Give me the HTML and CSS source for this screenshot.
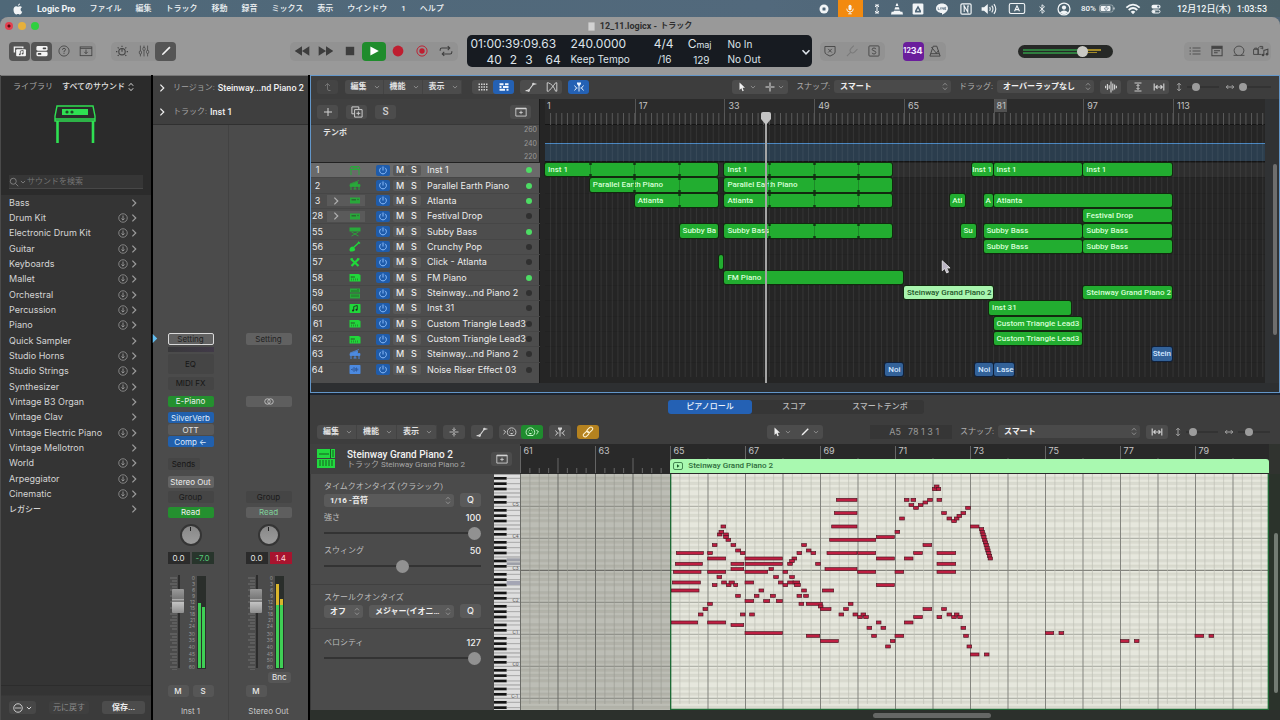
FILE: index.html
```html
<!DOCTYPE html>
<html lang="ja">
<head>
<meta charset="utf-8">
<title>12_11.logicx - トラック</title>
<link rel="stylesheet" href="styles.css">
</head>
<body>
<svg class="sprite" aria-hidden="true">
  <symbol id="i-apple" viewBox="0 0 20 24"><path fill="currentColor" d="M14 1c0 2.600-2 4.500-4 4.500C9.800 3.200 12 1.200 14 1zM18.500 17.500c-1.500 4-3.300 5.500-4.700 5.500-1.400 0-2-.9-3.800-.9s-2.400.9-3.700.9C3.500 23 1 18 1 13.500 1 9 3.500 6.600 6.200 6.600c1.600 0 2.800 1 3.800 1s2.400-1.100 4.300-1.100c1.500 0 2.800.8 3.600 1.900-3.800 2.300-3.200 7.500.6 9.100z"/></symbol>
  <symbol id="i-stopc" viewBox="0 0 20 20"><circle cx="10" cy="10" r="9" fill="currentColor"/><rect x="7" y="7" width="6" height="6" rx="1" fill="#4f6678"/></symbol>
  <symbol id="i-mic" viewBox="0 0 20 20"><rect x="7.500" y="3" width="5" height="9" rx="2.500" fill="currentColor"/><path d="M4.500 9.500a5.500 5.500 0 0 0 11 0M10 15v3M7 18h6" fill="none" stroke="currentColor" stroke-width="1.500"/></symbol>
  <symbol id="i-updown" viewBox="0 0 12 20"><path d="M6 2v16M2 6l4-4 4 4M2 14l4 4 4-4M2 2h8M2 18h8" fill="none" stroke="currentColor" stroke-width="2"/></symbol>
  <symbol id="i-cone" viewBox="0 0 20 20"><path fill="currentColor" d="M9 1h2l1.300 4H7.700zM7 7h6l1.300 4H5.700zM5 13h10l.8 1.500H19L20 19H0l1-4.500h3.200z"/></symbol>
  <symbol id="i-tri" viewBox="0 0 20 20"><rect x="1" y="1" width="18" height="18" rx="2" fill="currentColor"/><path d="M10 4l5 9v3H5v-3zM8 13h4l-2-4z" fill="#4f6678" fill-rule="evenodd"/></symbol>
  <symbol id="i-bubble" viewBox="0 0 24 22"><path fill="currentColor" d="M12 1c6.500 0 11 4 11 9 0 4.500-5 8.500-11 11.500v-3.200C5.500 18 1 14.500 1 10c0-5 4.500-9 11-9z"/><path d="M5 8v4h2.500M9.500 8v4M12 12V8l3 4V8M19.500 8H17v4h2.500M17 10h2" fill="none" stroke="#4f6678" stroke-width="1.200"/></symbol>
  <symbol id="i-n" viewBox="0 0 20 20"><rect x="1.500" y="1.500" width="17" height="17" rx="2" fill="none" stroke="currentColor" stroke-width="2"/><path d="M7 15V5l6 10V5M5.500 5H8M12 5h3" fill="none" stroke="currentColor" stroke-width="1.800"/></symbol>
  <symbol id="i-vol" viewBox="0 0 26 20"><path fill="currentColor" d="M1 7h4l6-5v16l-6-5H1z"/><path d="M14 7q2 3 0 6M17.500 4.500q4 5.500 0 11M21 2q6 8 0 16" fill="none" stroke="currentColor" stroke-width="1.800"/></symbol>
  <symbol id="i-a" viewBox="0 0 30 20"><rect x="1" y="1" width="28" height="18" rx="3" fill="none" stroke="currentColor" stroke-width="2"/><path d="M10.500 15L15 5l4.500 10M12 12h6" fill="none" stroke="currentColor" stroke-width="2"/></symbol>
  <symbol id="i-bt" viewBox="0 0 12 20"><path d="M1 5.500l10 9L6 18.500v-17L11 5.500l-10 9" fill="none" stroke="currentColor" stroke-width="1.800"/></symbol>
  <symbol id="i-user" viewBox="0 0 20 20"><circle cx="10" cy="10" r="8.500" fill="none" stroke="currentColor" stroke-width="1.800"/><circle cx="10" cy="8" r="3" fill="currentColor"/><path d="M4 15q6-6 12 0-6 5-12 0z" fill="currentColor"/></symbol>
  <symbol id="i-batt" viewBox="0 0 32 16"><rect x="1" y="1" width="27" height="14" rx="3.500" fill="none" stroke="currentColor" stroke-width="1.500" opacity=".6"/><rect x="3" y="3" width="20" height="10" rx="2" fill="currentColor"/><path d="M16 2l-6 7h4l-1 6 6-8h-4z" fill="currentColor" stroke="#4f6678"/><path d="M30 6v4" stroke="currentColor" stroke-width="2"/></symbol>
  <symbol id="i-wifi" viewBox="0 0 24 18"><path d="M2 7q10-9 20 0M5.500 10.500q6.500-6 13 0" fill="none" stroke="currentColor" stroke-width="2.600"/><path d="M8.500 13q3.500-3 7 0L12 17z" fill="currentColor"/></symbol>
  <symbol id="i-cc" viewBox="0 0 20 20"><rect x="1" y="1.500" width="18" height="7.500" rx="3.700" fill="currentColor"/><circle cx="14.500" cy="5.200" r="2.300" fill="#4f6678"/><rect x="2" y="12" width="16" height="6" rx="3" fill="none" stroke="currentColor" stroke-width="2"/><circle cx="5.500" cy="15" r="3" fill="currentColor"/></symbol>

  <symbol id="i-lib" viewBox="0 0 20 20"><path d="M2 12V4.500h12V6" fill="none" stroke="currentColor" stroke-width="2"/><rect x="4.500" y="7.500" width="14" height="10" rx="1.500" fill="currentColor"/><path d="M10.500 14.500V10l4-1v4.500" fill="none" stroke="#555" stroke-width="1.100"/><circle cx="9.700" cy="14.700" r="1.300" fill="#555"/><circle cx="13.700" cy="13.700" r="1.300" fill="#555"/></symbol>
  <symbol id="i-insp" viewBox="0 0 20 20"><rect x="2" y="3" width="16" height="6.500" rx="2" fill="currentColor"/><rect x="2" y="11" width="16" height="6.500" rx="2" fill="currentColor"/><rect x="11" y="5" width="5" height="2.500" rx="1" fill="#444"/><rect x="4" y="13" width="5" height="2.500" rx="1" fill="#444"/></symbol>
  <symbol id="i-help" viewBox="0 0 20 20"><circle cx="10" cy="10" r="8.500" fill="none" stroke="currentColor" stroke-width="1.400"/><path d="M7.500 8q0-2.500 2.500-2.500t2.500 2.300q0 1.500-2.500 2.700v1.500M10 13.300v1.500" fill="none" stroke="currentColor" stroke-width="1.500"/></symbol>
  <symbol id="i-down" viewBox="0 0 24 20"><rect x="2" y="3" width="20" height="15" fill="none" stroke="currentColor" stroke-width="1.500"/><path d="M2 5.500h20M12 7.500v7M9 11.500l3 3 3-3" fill="none" stroke="currentColor" stroke-width="1.500"/></symbol>
  <symbol id="i-smart" viewBox="0 0 24 20"><circle cx="12" cy="11" r="4.800" fill="none" stroke="currentColor" stroke-width="1.700"/><path d="M12 11V7M3 11h2M19 11h2M5.600 4.600L7 6M18.400 4.600L17 6M5.600 17.400L7 16M18.400 17.400L17 16M12 2v2" stroke="currentColor" stroke-width="1.700"/></symbol>
  <symbol id="i-mixer" viewBox="0 0 20 20"><path d="M4 1v18M10 1v18M16 1v18" stroke="currentColor" stroke-width="1.300"/><g fill="#999" stroke="currentColor" stroke-width="1.300"><rect x="2.200" y="10" width="3.600" height="5" rx="1.500"/><rect x="8.200" y="4" width="3.600" height="5" rx="1.500"/><rect x="14.200" y="9" width="3.600" height="5" rx="1.500"/></g></symbol>
  <symbol id="i-pencil" viewBox="0 0 20 20"><path d="M3 17l1-3L15.500 2.500l2 2L6 16z" fill="currentColor"/></symbol>
  <symbol id="i-rew" viewBox="0 0 24 20"><path d="M12 3v14L1 10zM23 3v14l-11-7z" fill="currentColor"/></symbol>
  <symbol id="i-fwd" viewBox="0 0 24 20"><path d="M12 3v14l11-7zM1 3v14l11-7z" fill="currentColor"/></symbol>
  <symbol id="i-stop" viewBox="0 0 20 20"><rect x="3" y="3" width="14" height="14" fill="currentColor"/></symbol>
  <symbol id="i-play" viewBox="0 0 20 20"><path d="M4 2.500v15L18 10z" fill="currentColor"/></symbol>
  <symbol id="i-rec" viewBox="0 0 20 20"><circle cx="10" cy="10" r="9" fill="currentColor"/></symbol>
  <symbol id="i-rec2" viewBox="0 0 20 20"><circle cx="10" cy="10" r="8.500" fill="none" stroke="currentColor" stroke-width="1.600"/><circle cx="10" cy="10" r="4.500" fill="currentColor"/></symbol>
  <symbol id="i-cycle" viewBox="0 0 24 20"><path d="M2 9.500V8q0-3 3-3h13M15 1.500L18.500 5 15 8.500M22 10.500V12q0 3-3 3H6M9 11.500L5.500 15 9 18.500" fill="none" stroke="currentColor" stroke-width="1.800"/></symbol>
  <symbol id="i-shield" viewBox="0 0 20 20"><path d="M1.500 2.500h17v9q0 3-3 4.200L10 18.500l-5.500-2.800q-3-1.200-3-4.200zM7 6.500l6 6M13 6.500l-6 6" fill="none" stroke="currentColor" stroke-width="1.500"/></symbol>
  <symbol id="i-tune" viewBox="0 0 20 20"><path d="M1.500 18.500L8 12M8 12q-3-3 .5-6.500L13 1M8 12q3 3 6.500-.5L19 7" fill="none" stroke="currentColor" stroke-width="1.700"/></symbol>
  <symbol id="i-s" viewBox="0 0 20 20"><rect x="1.500" y="1.500" width="17" height="17" rx="1.500" fill="none" stroke="currentColor" stroke-width="1.500"/><path d="M13 7q0-2-3-2t-3 2.300q0 2 3 2.500t3 2.700Q13 15 10 15t-3-2" fill="none" stroke="currentColor" stroke-width="1.500"/></symbol>
  <symbol id="i-metro" viewBox="0 0 20 20"><path d="M1.500 18.500L7 2h6l5.500 16.500zM3 14.500h14M4 3.500l9 11M16 9l-4 5" fill="none" stroke="currentColor" stroke-width="1.600"/></symbol>
  <symbol id="i-list" viewBox="0 0 24 20"><path d="M7 4h16M7 10h16M7 16h16M1 4h3M1 10h3M1 16h3" stroke="currentColor" stroke-width="1.700"/></symbol>
  <symbol id="i-note" viewBox="0 0 20 20"><path d="M1.500 2h17v16h-17zM1.500 5.500h17M5 9.500h10M5 13h6" fill="none" stroke="currentColor" stroke-width="1.700"/><path d="M1.500 2h17v4h-17z" fill="currentColor"/></symbol>
  <symbol id="i-loop" viewBox="0 0 22 20"><path d="M1 18h20M8 18q-6-2.500-6-8.500a9 8.500 0 0 1 18 0q0 6-6 8.500" fill="none" stroke="currentColor" stroke-width="1.600"/></symbol>
  <symbol id="i-media" viewBox="0 0 28 20"><path d="M1 7h8v9H1zM9 16V5l3-3h5v5M13 5h4M9 16h6M3 7V5h4v2" fill="none" stroke="currentColor" stroke-width="1.600"/><path d="M19 17V9l7-2v8" fill="none" stroke="currentColor" stroke-width="1.800"/><circle cx="17.500" cy="17" r="2.300" fill="currentColor"/><circle cx="24.500" cy="15.500" r="2.300" fill="currentColor"/></symbol>

  <symbol id="i-chev" viewBox="0 0 10 10"><path d="M1.500 3.200L5 6.800l3.500-3.600" fill="none" stroke="currentColor" stroke-width="1.500"/></symbol>
  <symbol id="i-right" viewBox="0 0 10 10"><path d="M3 .8L7.200 5 3 9.200" fill="none" stroke="currentColor" stroke-width="1.500"/></symbol>
  <symbol id="i-pop" viewBox="0 0 10 16"><path d="M1.500 6L5 2.200 8.500 6M1.500 10L5 13.800 8.500 10" fill="none" stroke="currentColor" stroke-width="1.500"/></symbol>
  <symbol id="i-up" viewBox="0 0 20 20"><path d="M4 8l5-5 5 5M9 3v11q0 3 3 3h3" fill="none" stroke="currentColor" stroke-width="1.800"/></symbol>
  <symbol id="i-dots" viewBox="0 0 20 20"><g fill="currentColor"><path d="M1 3h3v3H1zM6 3h3v3H6zM11 3h3v3h-3zM16 3h3v3h-3zM1 8.500h3v3H1zM6 8.500h3v3H6zM11 8.500h3v3h-3zM16 8.500h3v3h-3zM1 14h3v3H1zM6 14h3v3H6zM11 14h3v3h-3zM16 14h3v3h-3z"/></g></symbol>
  <symbol id="i-rows" viewBox="0 0 20 20"><path d="M1 4.500h8M12 4.500h7M1 10h4M8 10h11M1 15.500h11M15 15.500h4" stroke="currentColor" stroke-width="3.600"/></symbol>
  <symbol id="i-auto" viewBox="0 0 20 20"><path d="M1 16h5L14 5h5" fill="none" stroke="currentColor" stroke-width="1.800"/><circle cx="6" cy="16" r="2.200" fill="currentColor"/><circle cx="14" cy="5" r="2.200" fill="currentColor"/></symbol>
  <symbol id="i-flex" viewBox="0 0 20 20"><path d="M2 3v14h2Q8 14 16 3h2v14h-2Q12 6 4 3z" fill="none" stroke="currentColor" stroke-width="1.600"/></symbol>
  <symbol id="i-catch" viewBox="0 0 20 20"><path d="M6 1h8v3l-4 5-4-5z" fill="currentColor"/><path d="M10 7v12M1 7l4 5-4 5M19 7l-4 5 4 5M5 12h2M13 12h2" fill="none" stroke="currentColor" stroke-width="1.900"/></symbol>
  <symbol id="i-arrow" viewBox="0 0 16 20"><path d="M3 1v15l3.700-3.500L9 18.500l2.500-1-2.300-5.800H14z" fill="currentColor"/></symbol>
  <symbol id="i-cross" viewBox="0 0 20 20"><path d="M10 1v7M10 12v7M1 10h7M12 10h7" stroke="currentColor" stroke-width="1.800"/><circle cx="10" cy="10" r="1.500" fill="currentColor"/></symbol>
  <symbol id="i-wave" viewBox="0 0 20 20"><path d="M1 8v4M4 5v10M7 7v6M10 1v18M13 4v12M16 6v8M19 8v4" stroke="currentColor" stroke-width="1.900"/></symbol>
  <symbol id="i-vfit" viewBox="0 0 20 20"><path d="M3 2h14M3 18h14M10 5v10M7 8l3-3 3 3M7 12l3 3 3-3" fill="none" stroke="currentColor" stroke-width="1.900"/></symbol>
  <symbol id="i-hfit" viewBox="0 0 20 20"><path d="M2 4v12M18 4v12M4.500 10h11M7.500 7l-3 3 3 3M12.500 7l3 3-3 3" fill="none" stroke="currentColor" stroke-width="1.900"/></symbol>
  <symbol id="i-v" viewBox="0 0 10 16"><path d="M5 2v12M2 5l3-3 3 3M2 11l3 3 3-3" fill="none" stroke="currentColor" stroke-width="1.600"/></symbol>
  <symbol id="i-h" viewBox="0 0 16 10"><path d="M2 5h12M5 2L2 5l3 3M11 2l3 3-3 3" fill="none" stroke="currentColor" stroke-width="1.600"/></symbol>
  <symbol id="i-plus" viewBox="0 0 20 20"><path d="M10 2v16M2 10h16" stroke="currentColor" stroke-width="2"/></symbol>
  <symbol id="i-dup" viewBox="0 0 20 20"><path d="M5 13H1.500V1.500H13V5M6 6h12.500v12.500H6zM12.200 9v6.500M9 12.200h6.500" fill="none" stroke="currentColor" stroke-width="1.600"/></symbol>
  <symbol id="i-addw" viewBox="0 0 22 20"><path d="M1.500 3h19v14.500h-19zM11 7.500v6.500M7.800 10.800h6.400" fill="none" stroke="currentColor" stroke-width="1.600"/><path d="M1.500 2.500h19v2.500h-19z" fill="currentColor"/></symbol>
  <symbol id="i-power" viewBox="0 0 20 20"><path d="M10 1v9M5.500 4a7.500 7.500 0 1 0 9 0" fill="none" stroke="currentColor" stroke-width="2.100"/></symbol>
  <symbol id="i-collapse" viewBox="0 0 20 20"><path d="M1 10h18M10 1v6M7 4.500l3 3 3-3M10 19v-6M7 15.500l3-3 3 3" fill="none" stroke="currentColor" stroke-width="1.600"/></symbol>
  <symbol id="i-midiin" viewBox="0 0 26 20"><path d="M1 6l4 4-4 4" fill="none" stroke="currentColor" stroke-width="1.800"/><path d="M11 16.500a8 8 0 1 1 10 0z" fill="none" stroke="currentColor" stroke-width="1.600"/><path d="M12 10h1M14 7h1M17.500 7h1M19.500 10h1M14 13h4" stroke="currentColor" stroke-width="2"/></symbol>
  <symbol id="i-midiout" viewBox="0 0 26 20"><path d="M21 6l4 4-4 4" fill="none" stroke="currentColor" stroke-width="1.800"/><path d="M5 16.500a8 8 0 1 1 10 0z" fill="none" stroke="currentColor" stroke-width="1.600"/><path d="M6 10h1M8 7h1M11.500 7h1M13.500 10h1M8 13h4" stroke="currentColor" stroke-width="2"/></symbol>
  <symbol id="i-link" viewBox="0 0 20 20"><g fill="none" stroke="currentColor" stroke-width="1.700"><rect x="7.500" y="3.500" width="11" height="6" rx="3" transform="rotate(-45 13 6.500)"/><rect x="1.500" y="10.500" width="11" height="6" rx="3" transform="rotate(-45 7 13.500)"/></g></symbol>
  <symbol id="i-search" viewBox="0 0 20 20"><circle cx="8.500" cy="8.500" r="6" fill="none" stroke="currentColor" stroke-width="1.800"/><path d="M13 13l5.500 5.500" stroke="currentColor" stroke-width="1.800"/></symbol>
  <symbol id="i-dl" viewBox="0 0 20 20"><circle cx="10" cy="10" r="8.500" fill="none" stroke="currentColor" stroke-width="1.500"/><path d="M10 5v9M6.800 11l3.200 3.200 3.200-3.200" fill="none" stroke="currentColor" stroke-width="1.800"/></symbol>
  <symbol id="i-more" viewBox="0 0 20 20"><circle cx="10" cy="10" r="8.500" fill="none" stroke="currentColor" stroke-width="1.600"/><g fill="currentColor"><circle cx="6" cy="10" r="1.400"/><circle cx="10" cy="10" r="1.400"/><circle cx="14" cy="10" r="1.400"/></g></symbol>
  <symbol id="i-stereo" viewBox="0 0 20 14"><g fill="none" stroke="currentColor" stroke-width="1.800"><circle cx="7" cy="7" r="5.500"/><circle cx="13" cy="7" r="5.500"/></g></symbol>

  <symbol id="t-keys" viewBox="0 0 24 20"><path d="M4 2h16l2 6H2zM4 8v11M20 8v11" fill="none" stroke="currentColor" stroke-width="2"/><path d="M7 3.500h10V6H7z" fill="currentColor"/></symbol>
  <symbol id="t-grand" viewBox="0 0 24 20"><path d="M2 7L20 0M5 7l12-4v5h5v4H2V8z" fill="currentColor" stroke="currentColor" stroke-width="1.500"/><path d="M4 11v8M12 11v6M20 11v8M9 17h6" stroke="currentColor" stroke-width="2"/></symbol>
  <symbol id="t-box" viewBox="0 0 24 20"><path d="M2 4h20v12H2z" fill="currentColor"/><path d="M5 7h9v3H5z" fill="#2c6b32"/><circle cx="18" cy="8" r="1.500" fill="#2c6b32"/></symbol>
  <symbol id="t-synth" viewBox="0 0 24 20"><path d="M1 2h22v8H1z" fill="currentColor"/><path d="M5 11l14 8M19 11L5 19" stroke="currentColor" stroke-width="1.800"/></symbol>
  <symbol id="t-guitar" viewBox="0 0 24 20"><path d="M2 13q2-3 4.500-3t5 4-3 5.500-7-.5 .5-6z" fill="currentColor"/><path d="M8 13L20 2M18 .5l4 3.500" stroke="currentColor" stroke-width="2.800"/></symbol>
  <symbol id="t-x" viewBox="0 0 24 20"><path d="M4 3l15 14M19 3L5 17" stroke="currentColor" stroke-width="4.500"/><path d="M3 3h5M16 3h5" stroke="currentColor" stroke-width="3"/></symbol>
  <symbol id="t-box2" viewBox="0 0 24 20"><path d="M1 3h18l4 2v13H1z" fill="currentColor"/><path d="M4 8h7v2H4zM5 12v4M9 12v4M13 12v4M17 12v4" stroke="#2a6a2e" stroke-width="1.200" fill="none"/></symbol>
  <symbol id="t-rack" viewBox="0 0 24 20"><path d="M2 0h20v8H2zM2 10h20v10H2z" fill="currentColor"/><path d="M4 5h12M18 1v6M6 12v5M10 12v5M14 12v5M18 12v5" stroke="#1c5220" stroke-width="1.200"/></symbol>
  <symbol id="t-note" viewBox="0 0 24 20"><rect x="1" y="1" width="22" height="18" rx="1.500" fill="currentColor"/><path d="M9.500 14V6l7-2v8" fill="none" stroke="#222" stroke-width="1.700"/><circle cx="8" cy="14" r="2" fill="#222"/><circle cx="15" cy="12.500" r="2" fill="#222"/></symbol>
  <symbol id="t-wave" viewBox="0 0 24 20"><rect x="1" y="1" width="22" height="18" rx="1.500" fill="currentColor"/><path d="M5 9v2M7.500 8v4M10 5v10M12.500 7v6M15 6v8M17.500 8v4" stroke="#2b5290" stroke-width="1.600"/></symbol>
</svg>

<header class="menubar">
  <nav class="menus">
    <svg class="ic apple"><use href="#i-apple"/></svg>
    <a class="app" href="#">Logic Pro</a><a href="#">ファイル</a><a href="#">編集</a><a href="#">トラック</a><a href="#">移動</a><a href="#">録音</a><a href="#">ミックス</a><a href="#">表示</a><a href="#">ウインドウ</a><a href="#">1</a><a href="#">ヘルプ</a>
  </nav>
  <div class="status">
    <svg class="ic w10"><use href="#i-stopc"/></svg>
    <span class="mic"><svg class="ic w12"><use href="#i-mic"/></svg></span>
    <svg class="ic w10"><use href="#i-updown"/></svg>
    <svg class="ic w12"><use href="#i-cone"/></svg>
    <svg class="ic w12"><use href="#i-tri"/></svg>
    <svg class="ic w18"><use href="#i-bubble"/></svg>
    <svg class="ic w12"><use href="#i-n"/></svg>
    <svg class="ic w16"><use href="#i-vol"/></svg>
    <svg class="ic w22"><use href="#i-a"/></svg>
    <svg class="ic w10"><use href="#i-bt"/></svg>
    <svg class="ic w16"><use href="#i-user"/></svg>
    <span class="batt">80%<svg class="ic w16"><use href="#i-batt"/></svg></span>
    <svg class="ic w18"><use href="#i-wifi"/></svg>
    <svg class="ic w10"><use href="#i-cc"/></svg>
    <time class="clock"><span>12月12日(木)</span> <span>1:03:53</span></time>
  </div>
</header>

<div class="window">
  <div class="titlebar">
    <div class="lights"><button class="light red" aria-label="閉じる"></button><button class="light amber" aria-label="しまう"></button><button class="light green" aria-label="拡大"></button></div>
    <h1 class="title"><span class="doc"></span>12_11.logicx - <small>トラック</small></h1>
  </div>

  <div class="controlbar">
    <div class="cgroup">
      <button class="cb on" aria-label="ライブラリ"><svg class="ic w16"><use href="#i-lib"/></svg></button>
      <button class="cb on" aria-label="インスペクタ"><svg class="ic w16"><use href="#i-insp"/></svg></button>
      <button class="cb" aria-label="ヘルプ"><svg class="ic w12"><use href="#i-help"/></svg></button>
      <button class="cb" aria-label="ツールバー"><svg class="ic w14"><use href="#i-down"/></svg></button>
    </div>
    <div class="cgroup second">
      <button class="cb" aria-label="Smart Control"><svg class="ic w16"><use href="#i-smart"/></svg></button>
      <button class="cb" aria-label="ミキサー"><svg class="ic w12"><use href="#i-mixer"/></svg></button>
      <button class="cb on" aria-label="エディタ"><svg class="ic w12"><use href="#i-pencil"/></svg></button>
    </div>
    <i class="sp sp-a"></i>
    <div class="cgroup transport">
      <button class="cb" aria-label="巻き戻し"><svg class="ic w16"><use href="#i-rew"/></svg></button>
      <button class="cb" aria-label="早送り"><svg class="ic w16"><use href="#i-fwd"/></svg></button>
      <button class="cb" aria-label="停止"><svg class="ic w12"><use href="#i-stop"/></svg></button>
      <button class="cb play" aria-label="再生"><svg class="ic w12"><use href="#i-play"/></svg></button>
      <button class="cb rec" aria-label="録音"><svg class="ic w12"><use href="#i-rec"/></svg></button>
      <button class="cb rec" aria-label="キャプチャ録音"><svg class="ic w12"><use href="#i-rec2"/></svg></button>
      <button class="cb" aria-label="サイクル"><svg class="ic w14"><use href="#i-cycle"/></svg></button>
    </div>
    <div class="lcd">
      <div class="lcd-pos"><b>01:00:39:09.63</b><span class="beats"><b>40</b><b>2</b><b>3</b><b>64</b></span></div>
      <div><b>240.0000</b><span>Keep Tempo</span></div>
      <div class="lcd-r"><b>4/4</b><span class="div">/16</span></div>
      <div class="lcd-r"><b>C<small>maj</small></b><span class="div">129</span></div>
      <div><span>No In</span><span>No Out</span></div>
      <svg class="ic w10"><use href="#i-chev"/></svg>
    </div>
    <div class="cgroup">
      <button class="cb" aria-label="置き換え"><svg class="ic w12"><use href="#i-shield"/></svg></button>
      <button class="cb dim" aria-label="チューナー"><svg class="ic w12"><use href="#i-tune"/></svg></button>
      <button class="cb" aria-label="ソロ"><svg class="ic w12"><use href="#i-s"/></svg></button>
    </div>
    <div class="cgroup count">
      <button class="cb purple" aria-label="カウントイン"><small>12</small>34</button>
      <button class="cb" aria-label="メトロノーム"><svg class="ic w12"><use href="#i-metro"/></svg></button>
    </div>
    <i class="sp sp-b"></i>
    <input class="master" type="range" value="71" aria-label="マスターボリューム">
    <i class="sp sp-c"></i>
    <div class="cgroup">
      <button class="cb" aria-label="リストエディタ"><svg class="ic w12"><use href="#i-list"/></svg></button>
      <button class="cb" aria-label="メモパッド"><svg class="ic w12"><use href="#i-note"/></svg></button>
      <button class="cb" aria-label="ループブラウザ"><svg class="ic w12"><use href="#i-loop"/></svg></button>
      <button class="cb" aria-label="ブラウザ"><svg class="ic w16"><use href="#i-media"/></svg></button>
    </div>
  </div>

  <div class="content">
    <aside class="library">
      <div class="lib-top">
        <div class="lib-tabs"><span>ライブラリ</span><button class="lib-all">すべてのサウンド<svg class="ic w8"><use href="#i-pop"/></svg></button></div>
        <svg class="lib-art" viewBox="0 0 44 40"><g fill="none" stroke="#2fe052" stroke-width="1.400"><path d="M4 1h36l2 10v5H2v-5zM2 14h40"/><path d="M4.500 16v22M40 16v22" stroke-width="2.600"/></g><path d="M9 4h26v6H9z" fill="#2fe052"/><circle cx="14" cy="7" r="1.600" fill="#1d4d26"/><circle cx="19" cy="7" r="1.600" fill="#1d4d26"/></svg>
        <label class="search"><svg class="ic w10"><use href="#i-search"/></svg><svg class="ic w6"><use href="#i-chev"/></svg><input type="text" placeholder="サウンドを検索" aria-label="サウンドを検索"></label>
      </div>
      <ul class="lib-list" id="library"></ul>
      <div class="lib-foot">
        <button class="btn" aria-label="アクション"><svg class="ic w10"><use href="#i-more"/></svg><svg class="ic w6"><use href="#i-chev"/></svg></button>
        <button class="btn faded">元に戻す</button>
        <button class="btn bold">保存...</button>
      </div>
    </aside>

    <section class="inspector">
      <div class="insp-head">
        <div class="insp-row"><svg class="ic w8"><use href="#i-right"/></svg><small>リージョン:</small><span>Steinway...nd Piano 2</span></div>
        <div class="insp-row"><svg class="ic w8"><use href="#i-right"/></svg><small>トラック:</small><span>Inst 1</span></div>
      </div>
      <div class="strips">
        <div class="strip">
          <svg class="mark" viewBox="0 0 8 12"><path d="M1 0l6 6-6 6z" fill="#62bdf0"/></svg>
          <button class="slot setting sel">Setting</button>
          <div class="gain"></div>
          <button class="slot eq">EQ</button>
          <button class="slot midi">MIDI FX</button>
          <button class="slot inst">E-Piano</button>
          <div class="fx"><button class="slot">SilverVerb</button><button class="slot off">OTT</button><button class="slot">Comp ←</button></div>
          <button class="slot sends">Sends</button>
          <button class="slot out">Stereo Out</button>
          <button class="slot grp">Group</button>
          <button class="slot read">Read</button>
          <div class="knob"></div>
          <div class="vals"><span>0.0</span><span class="peak">-7.0</span></div>
          <div class="fader" data-left="28" data-right="32"></div>
          <div class="ms"><button class="btn">M</button><button class="btn">S</button></div>
          <div class="sname">Inst 1</div>
        </div>
        <div class="strip">
          <button class="slot setting">Setting</button>
          <button class="slot inst plain" aria-label="ステレオ"><svg class="ic w10"><use href="#i-stereo"/></svg></button>
          <button class="slot grp">Group</button>
          <button class="slot read idle">Read</button>
          <div class="knob"></div>
          <div class="vals"><span>0.0</span><span class="clip">1.4</span></div>
          <div class="fader" data-left="9" data-right="24" data-hot="1"></div>
          <button class="btn bnc">Bnc</button>
          <div class="ms"><button class="btn">M</button></div>
          <div class="sname">Stereo Out</div>
        </div>
      </div>
    </section>

    <main class="main">
      <section class="tracks">
        <div class="bar tbar">
          <button class="tb faint" aria-label="上の階層へ"><svg class="ic w10"><use href="#i-up"/></svg></button>
          <div class="seg menuseg"><button>編集<svg class="ic w6"><use href="#i-chev"/></svg></button><button>機能<svg class="ic w6"><use href="#i-chev"/></svg></button><button>表示<svg class="ic w6"><use href="#i-chev"/></svg></button></div>
          <div class="seg gap-l"><button aria-label="グリッド"><svg class="ic w10"><use href="#i-dots"/></svg></button><button class="blue" aria-label="リスト"><svg class="ic w10"><use href="#i-rows"/></svg></button></div>
          <div class="seg"><button aria-label="オートメーション"><svg class="ic w12"><use href="#i-auto"/></svg></button><button aria-label="Flex"><svg class="ic w12"><use href="#i-flex"/></svg></button></div>
          <button class="tb blue" aria-label="キャッチ"><svg class="ic w10"><use href="#i-catch"/></svg></button>
          <i class="sp sp-a"></i>
          <div class="seg tools"><button aria-label="ポインタツール"><svg class="ic w10"><use href="#i-arrow"/></svg><svg class="ic w6"><use href="#i-chev"/></svg></button><button aria-label="マーキーツール"><svg class="ic w10"><use href="#i-cross"/></svg><svg class="ic w6"><use href="#i-chev"/></svg></button></div>
          <label class="lab" for="snap">スナップ:</label>
          <span class="pick pick-snap"><select id="snap"><option>スマート</option></select><svg class="ic w6"><use href="#i-pop"/></svg></span>
          <label class="lab" for="drag">ドラッグ:</label>
          <span class="pick pick-drag"><select id="drag"><option>オーバーラップなし</option></select><svg class="ic w6"><use href="#i-pop"/></svg></span>
          <button class="tb" aria-label="波形"><svg class="ic w12"><use href="#i-wave"/></svg></button>
          <div class="seg"><button aria-label="縦に合わせる"><svg class="ic w10"><use href="#i-vfit"/></svg></button><button aria-label="横に合わせる"><svg class="ic w12"><use href="#i-hfit"/></svg></button></div>
          <label class="zoom"><svg class="ic w8"><use href="#i-v"/></svg><input class="range small" type="range" value="22" aria-label="縦ズーム"></label>
          <label class="zoom"><svg class="ic w10"><use href="#i-h"/></svg><input class="range small" type="range" value="0" aria-label="横ズーム"></label>
        </div>
        <div class="arrange">
          <div class="heads">
            <div class="heads-top"><button class="tb" aria-label="トラックを追加"><svg class="ic w10"><use href="#i-plus"/></svg></button><button class="tb" aria-label="トラックを複製"><svg class="ic w12"><use href="#i-dup"/></svg></button><button class="tb solo">S</button><i class="fill"></i><button class="tb" aria-label="グローバルトラック"><svg class="ic w12"><use href="#i-addw"/></svg></button></div>
            <div class="tempo-head"><b>テンポ</b><div class="scale"><span>260</span><span>240</span><span>220</span></div></div>
            <ul class="track-list" id="tracks"></ul>
          </div>
          <div class="timeline">
            <div class="ruler" id="ruler"></div>
            <div class="tempo-lane"><div class="tempo-fill"></div></div>
            <div class="lanes" id="lanes"></div>
            <svg class="gridlines" id="gridlines"></svg>
            <div class="over"><div class="playhead" id="playhead"><svg viewBox="0 0 12 13"><path d="M1 2q0-2 2-2h6q2 0 2 2v5l-5 6-5-6z" fill="#c4c4c4"/></svg></div></div>
            <svg class="pointer" viewBox="0 0 16 22"><path d="M2 1v16l4-3.500 3 7 3-1.300-3-6.700h5.500z" fill="#b9b3c2" stroke="#eee" stroke-width="1.300"/></svg>
          </div>
          <div class="gutter"><div class="vthumb"></div></div>
        </div>
        <div class="tracks-foot"></div>
      </section>

      <section class="editor">
        <div class="tabs" role="tablist"><button role="tab" class="active" aria-selected="true">ピアノロール</button><button role="tab">スコア</button><button role="tab">スマートテンポ</button></div>
        <div class="bar ebar">
          <div class="seg menuseg wide"><button>編集<svg class="ic w6"><use href="#i-chev"/></svg></button><button>機能<svg class="ic w6"><use href="#i-chev"/></svg></button><button>表示<svg class="ic w6"><use href="#i-chev"/></svg></button></div>
          <button class="tb" aria-label="折りたたむ"><svg class="ic w10"><use href="#i-collapse"/></svg></button>
          <button class="tb" aria-label="オートメーション"><svg class="ic w12"><use href="#i-auto"/></svg></button>
          <div class="seg"><button aria-label="MIDI入力"><svg class="ic w14"><use href="#i-midiin"/></svg></button><button class="greenb" aria-label="MIDI出力"><svg class="ic w14"><use href="#i-midiout"/></svg></button></div>
          <button class="tb" aria-label="キャッチ"><svg class="ic w10"><use href="#i-catch"/></svg></button>
          <button class="tb gold" aria-label="リンク"><svg class="ic w12"><use href="#i-link"/></svg></button>
          <i class="sp sp-d"></i>
          <div class="seg tools"><button aria-label="ポインタツール"><svg class="ic w10"><use href="#i-arrow"/></svg><svg class="ic w6"><use href="#i-chev"/></svg></button><button aria-label="鉛筆ツール"><svg class="ic w10"><use href="#i-pencil"/></svg><svg class="ic w6"><use href="#i-chev"/></svg></button></div>
          <i class="sp sp-e"></i>
          <output class="readout"><span>A5</span><span>78 1 3 1</span></output>
          <label class="lab" for="esnap">スナップ:</label>
          <span class="pick pick-esnap"><select id="esnap"><option>スマート</option></select><svg class="ic w6"><use href="#i-pop"/></svg></span>
          <button class="tb" aria-label="横に合わせる"><svg class="ic w12"><use href="#i-hfit"/></svg></button>
          <label class="zoom"><svg class="ic w8"><use href="#i-v"/></svg><input class="range small" type="range" value="12" aria-label="縦ズーム"></label>
          <label class="zoom"><svg class="ic w10"><use href="#i-h"/></svg><input class="range small" type="range" value="28" aria-label="横ズーム"></label>
        </div>
        <div class="ebody">
          <div class="ehead">
            <svg class="eicon" viewBox="0 0 18 20"><path d="M0 0h18v9H0zM0 10h18v9H0z" fill="#22d83f"/><path d="M2 5h10M13.500 0v9M16 1v7M3 11v6M6 11v6M9 11v6M12 11v6M15 11v6" stroke="#155c20" stroke-width="1"/></svg>
            <div class="enames"><b>Steinway Grand Piano 2</b><span><small>トラック</small> Steinway Grand Piano 2</span></div>
            <button class="tb" aria-label="表示を追加"><svg class="ic w12"><use href="#i-addw"/></svg></button>
          </div>
          <div class="eruler"><div class="enums" id="enums"></div><svg class="eticks" id="eticks"></svg><div class="eregion" id="eregion"><svg class="ic w10" viewBox="0 0 20 16"><rect x="1" y="1" width="18" height="14" rx="3" fill="none" stroke="#2c6a3a" stroke-width="1.600"/><path d="M8 4.500v7l5-3.500z" fill="#1d5a2c"/></svg>Steinway Grand Piano 2</div></div>
          <div class="corner"></div>
          <div class="params">
            <fieldset class="pset">
              <label class="plab" for="tq">タイムクオンタイズ (クラシック)</label>
              <div class="prow"><span class="pick grow"><select id="tq" class="mixed"><option>1/16 -音符</option></select><svg class="ic w6"><use href="#i-pop"/></svg></span><button class="tb q">Q</button></div>
              <div class="pval"><label for="str">強さ</label><output>100</output></div>
              <input class="range" id="str" type="range" value="100">
              <div class="pval"><label for="swg">スウィング</label><output>50</output></div>
              <input class="range" id="swg" type="range" value="50">
            </fieldset>
            <fieldset class="pset">
              <label class="plab" for="sq">スケールクオンタイズ</label>
              <div class="prow"><span class="pick key"><select id="sq"><option>オフ</option></select><svg class="ic w6"><use href="#i-pop"/></svg></span><span class="pick grow"><select aria-label="スケール"><option>メジャー(イオニ…</option></select><svg class="ic w6"><use href="#i-pop"/></svg></span><button class="tb q">Q</button></div>
            </fieldset>
            <fieldset class="pset">
              <div class="pval"><label for="vel">ベロシティ</label><output>127</output></div>
              <input class="range" id="vel" type="range" value="100">
            </fieldset>
          </div>
          <svg class="keys" id="keys" viewBox="0 252 78 708" preserveAspectRatio="none"></svg>
          <svg class="roll" id="roll" viewBox="-420 252 2247 708" preserveAspectRatio="none"></svg>
          <div class="gutter"><div class="vthumb low"></div></div>
        </div>
        <div class="hscroll"><div class="hthumb"></div></div>
      </section>
    </main>
  </div>
</div>
<script src="app.js"></script>
</body>
</html>
```

FILE: styles.css
```css
* { box-sizing: border-box; }
body {
  margin: 0; height: 100vh; overflow: hidden; display: flex; flex-direction: column;
  background: #4f6678; color: #e4e4e4;
  font: 9px/12px Roboto, "Noto Sans CJK JP", sans-serif;
}
button, input, select { font: inherit; color: inherit; margin: 0; padding: 0; border: 0; background: none; }
button { display: flex; align-items: center; justify-content: center; white-space: nowrap; }
a { color: inherit; text-decoration: none; }
ul { list-style: none; margin: 0; padding: 0; }
small { font-size: 8px; font-weight: inherit; }
.sprite { position: absolute; width: 0; height: 0; }
.ic { display: block; flex: none; height: 12px; width: 12px; }
.w6 { width: 6px; height: 10px; }
.w8 { width: 8px; height: 10px; }
.w10 { width: 10px; height: 10px; }
.w12 { width: 12px; height: 12px; }
.w14 { width: 14px; height: 12px; }
.w16 { width: 16px; height: 14px; }
.w18 { width: 18px; height: 12px; }
.w22 { width: 22px; height: 11px; }
.fill { flex: 1; }
.sp { min-width: 8px; }
.sp-a { flex: 110 1 0; }
.sp-b { flex: 70 1 0; }
.sp-c { flex: 69 1 0; }
.sp-d { flex: 178 1 0; }
.sp-e { flex: 40 1 0; }

/* menu bar */
.menubar { flex: none; height: 17px; display: flex; justify-content: space-between; align-items: center; background: linear-gradient(90deg, #4f6878, #52697c 60%, #4a6068); color: #f2f5f7; padding: 0 13px; }
.menus { display: flex; align-items: center; gap: 14px; font-size: 8px; font-weight: 500; }
.menus .app { font-size: 9px; font-weight: 700; }
.menus .apple { width: 10px; height: 12px; }
.status { display: flex; align-items: center; gap: 9px; height: 100%; font-size: 8px; }
.mic { width: 25px; height: 17px; background: #f28a0f; display: flex; align-items: center; justify-content: center; }
.batt { display: flex; align-items: center; gap: 3px; font-weight: 500; }
.batt .ic { height: 9px; }
.clock { font-size: 9px; font-weight: 500; display: flex; gap: 6px; margin-left: 7px; }

/* window */
.window { flex: 1; min-height: 0; display: flex; flex-direction: column; background: #999; border-radius: 8px 8px 0 0; overflow: hidden; }
.titlebar { flex: none; height: 18px; display: grid; grid-template-columns: 1fr auto 1fr; align-items: center; padding: 0 5px; }
.lights { display: flex; gap: 5px; }
.light { width: 8px; height: 8px; border-radius: 50%; }
.red { background: radial-gradient(circle, #5c0b12 0 1px, #e2404f 2px); }
.amber { background: #e6b03c; }
.green { background: #2fd040; }
.title { margin: 0; font-size: 9px; line-height: 12px; font-weight: 700; color: #2e2e2e; display: flex; align-items: center; gap: 3px; }
.doc { width: 7px; height: 9px; background: #d2d2d2; border-radius: 1px; margin-right: 2px; border: 1px solid #bbb; }
.controlbar { flex: none; height: 40px; display: flex; align-items: center; padding: 0 9px 8px; }
.cgroup { display: flex; background: #929292; border-radius: 5px; gap: 1px; }
.cgroup.second { margin-left: 15px; }
.cb { width: 21px; height: 19px; border-radius: 4px; color: #444; }
.cb.on { background: #555; color: #f4f4f4; }
.cb.dim { color: #7a7a7a; }
.transport { gap: 0; margin-right: 9px; }
.transport .cb { width: 24px; color: #3d3d3d; }
.transport .play { background: #1f8c2c; color: #fff; }
.transport .rec { color: #bf1e30; }
.count { margin-left: 18px; }
.count .purple { background: #6a1d9c; color: #f5eaff; font: 700 9px/12px Inter, sans-serif; }
.count .purple small { font-size: 7px; }
.lcd { flex: none; width: 345px; height: 32px; margin-right: 8px; border-radius: 5px; background: #171b21; color: #dde3ea; display: flex; align-items: center; padding: 1px 1px 0 4px; font: 10px/15px Inter, sans-serif; }
.lcd > div { display: flex; flex-direction: column; }
.lcd b { font-weight: 400; font-size: 12px; line-height: 16px; }
.lcd > div > span { line-height: 15px; }
.lcd > div:nth-child(1) { width: 100px; }
.lcd > div:nth-child(2) { width: 67px; }
.lcd > div:nth-child(3) { width: 36px; }
.lcd > div:nth-child(4) { width: 38px; }
.lcd > div:nth-child(5) { flex: 1; margin-left: 16px; }
.lcd > .lcd-r { align-items: flex-end; }
.lcd small { font-size: 9px; }
.lcd .beats { display: flex; padding-left: 16px; gap: 8px; }
.lcd .beats b:last-child { margin-left: 5px; }
.div { padding-right: 2px; }
.master { appearance: none; width: 95px; height: 13px; border-radius: 7px; background: linear-gradient(#2f7d3f, #2f7d3f) 5px 4px / 62px 2px no-repeat, linear-gradient(#2f7d3f, #2f7d3f) 5px 7px / 62px 2px no-repeat, linear-gradient(#a38a28, #a38a28) 67px 4px / 16px 2px no-repeat, linear-gradient(#a38a28, #a38a28) 67px 7px / 12px 1px no-repeat, #262826; }
.master::-webkit-slider-thumb { appearance: none; width: 11px; height: 11px; border-radius: 50%; background: #c9c9c4; }

.content { flex: 1; min-height: 0; display: flex; background: #000; }

/* library */
.library { flex: none; width: 151px; margin-right: 2px; display: flex; flex-direction: column; background: #343434; border-left: 1px solid #4a4a4a; }
.lib-top { flex: none; height: 120px; background: #2b2b2b; padding: 4px 8px 6px; display: flex; flex-direction: column; border-top: 1px solid #777; }
.lib-tabs { display: flex; gap: 9px; padding-left: 4px; font-size: 8px; line-height: 13px; color: #a8a8a8; white-space: nowrap; }
.lib-all { font-size: 8px; font-weight: 500; color: #e2e2e2; gap: 2px; }
.lib-art { width: 44px; height: 40px; margin: 12px 0 0 44px; }
.search { margin-top: auto; height: 14px; display: flex; align-items: center; gap: 1px; color: #828282; background: #363636; border-bottom: 1px solid #484848; }
.search input { flex: 1; min-width: 0; font-size: 8px; }
.search input::placeholder { color: #747474; }
.lib-list { flex: none; height: 322px; display: grid; grid-auto-rows: 1fr; padding: 0 13px 0 8px; }
.lib-list li { display: flex; align-items: center; color: #d4d4d4; font: 9px/12px Inter, "Noto Sans CJK JP", sans-serif; }
.lib-list a { flex: 1; }
.lib-list .ic { color: #9c9c9c; margin-left: 2px; }
.lib-list .jp { font-size: 8px; font-weight: 500; }
.lib-foot { margin-top: auto; height: 35px; padding: 9px 6px 0 8px; border-top: 1px solid #2c2c2c; background: linear-gradient(#343434 9px, #3b3b3b 10px); display: flex; align-items: center; gap: 13px; font-size: 8px; }
.btn { height: 12px; background: #565656; border-radius: 3px; padding: 0 4px; color: #ececec; }
.lib-foot .btn { height: 13px; gap: 3px; background: #474747; }
.lib-foot .faded { flex: 39; color: #8a8a8a; background: #3f3f3f; font-size: 8px; }
.lib-foot .bold { flex: 46; font-weight: 700; background: #4c4c4c; }

/* inspector */
.inspector { flex: none; width: 155px; margin-right: 2px; display: flex; flex-direction: column; background: #4b4b4b; }
.insp-head { flex: none; height: 50px; background: #3f3f3f; border-bottom: 1px solid #303030; border-top: 1px solid #777; }
.insp-row { height: 24px; display: flex; align-items: center; gap: 3px; padding: 0 5px; white-space: nowrap; color: #f0f0f0; font-weight: 500; }
.insp-row small { color: #a2a2a2; margin-left: 4px; font-weight: 400; }
.strips { flex: 1; min-height: 0; display: grid; grid-template-columns: 75fr 80fr; }
.strip { position: relative; display: grid; justify-content: center; align-items: center; grid-template-columns: 46px; grid-template-rows: 1fr 12px 8px 22px 16px 20px 37px 7px 18px 17px 14px 16px 30px 15px 10px 95px 14px 14px 22px; }
.strip + .strip { border-left: 1px solid #424242; }
.mark { position: absolute; left: -1px; top: 208px; width: 6px; height: 11px; }
.slot { height: 11px; border-radius: 2px; font: 8px/10px Inter, sans-serif; color: #eee; background: #5c5c5c; }
.setting { grid-row: 2; height: 12px; color: #222; background: #616161; }
.setting.sel { border: 1px solid #d9d9d9; }
.gain { grid-row: 3; height: 5px; background: linear-gradient(90deg, #38383a, #413a48); }
.eq { grid-row: 4; height: 20px; background: #454545; color: #161616; }
.midi { grid-row: 5; height: 13px; background: #454545; color: #161616; }
.inst { grid-row: 6; background: #24902f; }
.inst.plain { background: #5e5e5e; color: #c4c4c4; }
.inst .ic { height: 7px; }
.fx { grid-row: 7; display: grid; grid-auto-rows: 1fr; height: 35px; gap: 1px; }
.fx .slot { height: auto; background: #2160ad; color: #dcebff; }
.fx .off { background: #5a5a5a; color: #e4e4e4; }
.sends { grid-row: 9; height: 12px; background: #454545; color: #161616; width: 32px; }
.out { grid-row: 10; height: 12px; background: #636363; }
.grp { grid-row: 11; height: 12px; background: #454545; color: #1a1a1a; }
.read { grid-row: 12; background: #24902f; }
.read.idle { background: #5e5e5e; color: #7fd09a; }
.knob { grid-row: 13; justify-self: center; width: 22px; height: 22px; border-radius: 50%; border: 2px solid #353535; background: linear-gradient(#222, #222) 50% 1px / 1px 4px no-repeat, linear-gradient(#888, #9c9c9c); }
.vals { grid-row: 14; display: grid; grid-template-columns: 1fr 1fr; gap: 2px; font: 8px/12px Inter, sans-serif; text-align: center; }
.vals span { background: #2b2b2b; }
.vals .peak { background: #28352c; color: #55c878; }
.vals .clip { background: #a8142e; color: #ffd7dc; }
.fader { grid-row: 16; height: 95px; display: grid; }
.fader > * { grid-area: 1 / 1; }
.fader svg { width: 46px; height: 95px; }
.fader text { font: 5px Inter, sans-serif; fill: #979797; text-anchor: end; }
.fader input { appearance: none; writing-mode: vertical-lr; direction: rtl; width: 12px; height: 93px; margin-left: 4px; background: linear-gradient(#2c2c2c, #2c2c2c) 6px 0 / 2px 100% no-repeat; }
.fader input::-webkit-slider-thumb { appearance: none; width: 12px; height: 24px; border-radius: 1px; background: linear-gradient(#9a9a9a, #777 10px, #ddd 11px, #333 12px, #c4c4c4 13px, #8e8e8e); }
.bnc { grid-row: 17; justify-self: end; height: 11px; font: 8px/10px Inter, sans-serif; margin-right: 1px; }
.ms { grid-row: 18; display: grid; grid-template-columns: 1fr 1fr; gap: 4px; font: 500 8px/10px Inter, sans-serif; }
.sname { grid-row: 19; text-align: center; font: 8px/12px Inter, sans-serif; color: #c8c8c8; padding-top: 3px; }

/* shared bars */
.main { flex: 1; min-width: 0; display: flex; flex-direction: column; background: #2d2d2d; }
.bar { flex: none; height: 23px; display: flex; align-items: center; padding: 0 8px 2px 6px; gap: 6px; background: #3d3d3d; white-space: nowrap; font-size: 8px; }
.tb, .seg { height: 14px; border-radius: 3px; background: #4c4c4c; color: #d2d2d2; flex: none; }
.tb { width: 21px; }
.seg { display: flex; }
.seg button { width: 21px; height: 14px; gap: 3px; }
.menuseg button { width: 39px; gap: 7px; font-weight: 700; color: #e2e2e2; border-right: 1px solid #434343; padding-left: 2px; }
.tbar .menuseg { margin-left: 1px; }
.menuseg.wide button { width: 40px; }
.menuseg .ic, .tools .w6 { color: #8f8f8f; }
.tools button { width: 28px; color: #f0f0f0; }
.gap-l { margin-left: 4px; }
.faint { background: #444; color: #787878; }
.blue, .seg .blue { background: #2461b4; color: #eef5ff; border-radius: 3px; }
.seg .greenb { background: #1f8c2e; color: #d9ffdc; border-radius: 3px; }
.gold { background: #b5821f; color: #fff4d4; }
.lab { color: #aeaeae; font-size: 8px; margin-left: 2px; margin-right: -2px; }
.pick { position: relative; height: 13px; flex: none; display: block; background: #4a4a4a; border-radius: 3px; }
.pick select { appearance: none; width: 100%; height: 13px; padding: 0 12px 0 6px; font-size: 8px; line-height: 13px; font-weight: 700; color: #f0f0f0; overflow: hidden; display: block; }
.pick .ic { position: absolute; right: 3px; top: 2px; height: 9px; color: #999; pointer-events: none; }
.pick-snap { width: 117px; }
.pick-drag { width: 97px; }
.pick-esnap { width: 142px; }
.zoom { display: flex; align-items: center; gap: 4px; color: #a4a4a4; }
.range { appearance: none; display: block; height: 14px; width: 100%; background: linear-gradient(#333, #333) 0 50% / 100% 2px no-repeat; }
.range::-webkit-slider-thumb { appearance: none; width: 13px; height: 13px; border-radius: 50%; background: #919191; }
.range.small { width: 32px; }
.range.small::-webkit-slider-thumb { width: 8px; height: 8px; background: #9c9c9c; }

/* tracks area */
.tracks { flex: 318 1 0; min-height: 0; display: flex; flex-direction: column; border: 1px solid #6396c8; }
.arrange { flex: 1; min-height: 0; display: flex; background: #2a2a2a; }
.heads { flex: none; width: 229px; display: flex; flex-direction: column; background: #4d4d4d; border-right: 1px solid #1a1a1a; }
.heads-top { flex: none; height: 26px; display: flex; align-items: center; gap: 8px; padding: 0 8px 0 6px; background: #404040; border-bottom: 1px solid #383838; }
.solo { font-weight: 500; font-size: 10px; }
.tempo-head { flex: none; height: 37px; display: flex; justify-content: space-between; padding: 0 2px 0 12px; }
.tempo-head b { font-size: 8px; line-height: 16px; font-weight: 700; }
.scale { display: flex; flex-direction: column; justify-content: space-between; font: 7px/10px Inter, sans-serif; color: #999; }
.track-list { flex: 1; min-height: 0; display: grid; grid-auto-rows: 1fr; padding-bottom: 6px; }
.track { display: flex; align-items: center; min-height: 0; border-top: 1px solid #464646; font: 9px/12px Inter, sans-serif; color: #ebebeb; }
.track.sel { background: #6a6a6a; border-top-color: #222; }
.tnum { width: 13px; text-align: center; margin-right: 3px; }
.tdisc { width: 18px; height: 11px; color: #b0b0b0; }
.tdisc .ic { height: 8px; }
.ticon { width: 20px; height: 11px; display: flex; align-items: center; justify-content: center; margin-right: 11px; }
.stack .tdisc, .stack .ticon { background: #5a5a5a; }
.ticon .ic { width: 12px; height: 11px; }
.tpow { width: 14px; height: 11px; background: #1f5cab; color: #8fc0ff; border-radius: 2px; margin-right: 3px; }
.tpow .ic { width: 10px; height: 9px; }
.tms { width: 14px; height: 11px; background: #585858; border-radius: 2px; font-weight: 500; }
.tname { flex: 1; padding-left: 6px; white-space: nowrap; }
.tdot { flex: none; width: 6px; height: 6px; border-radius: 50%; background: #303030; margin-right: 9px; }
.tdot.lit { background: #4ddc64; }
.timeline { position: relative; flex: 1; min-width: 0; display: flex; flex-direction: column; padding-left: 5px; background: #252525; }
.ruler { flex: none; height: 26px; position: relative; border-bottom: 1px solid #151515; background: #2b2b2b; }
.mark-num { position: absolute; top: 0; height: 25px; padding-left: 3px; border-left: 1px solid #555; font: 9px/13px Inter, sans-serif; color: #c4c4c4; }
.mark-num.first { border-color: transparent; padding-left: 1px; }
.mark-num.lit { padding-left: 0; }
.mark-num.lit span { display: block; height: 13px; background: #515151; padding: 0 1px 0 2px; }
.tempo-lane { flex: none; height: 37px; padding-top: 18px; border-bottom: 1px solid #151515; }
.tempo-fill { height: 18px; border-top: 1px solid #4a86c0; background: #2b3d4d; }
.lanes { flex: 1; min-height: 0; display: grid; grid-auto-rows: 1fr; padding-bottom: 6px; }
.lane { position: relative; min-height: 0; border-top: 1px solid #222; }
.lane:first-child { background: #2e2e2e; }
.region { position: absolute; top: 0; bottom: 1px; z-index: 2; border-radius: 2px; background: #22ad30; color: #d6ffd6; font: 500 8px/13px Roboto, sans-serif; padding-left: 3px; white-space: nowrap; overflow: hidden; box-shadow: 0 0 0 1px #12290f; }
.region.tight { padding-left: 0; text-align: center; }
.region.pale { background: #a9f5ae; color: #1e5428; }
.region.audio { background: #336299; color: #d7e8ff; box-shadow: 0 0 0 1px #10203a; }
.notch { position: absolute; top: 0; bottom: 0; width: 1px; background: #1d8a28; }
.notch::before, .notch::after { content: ""; position: absolute; left: -1px; width: 3px; height: 2px; background: #123a14; border-radius: 1px; }
.notch::before { top: 0; }
.notch::after { bottom: 0; }
.gridlines { position: absolute; left: 5px; top: 14px; width: calc(100% - 5px); height: calc(100% - 20px); pointer-events: none; }
.over { position: absolute; inset: 13px 0 0 5px; z-index: 3; pointer-events: none; }
.playhead { position: absolute; top: 0; bottom: 0; width: 2px; margin-left: -1px; background: #a5a5a5; }
.playhead svg { position: absolute; left: -5px; top: 0; width: 12px; height: 13px; }
.pointer { position: absolute; left: 401px; top: 161px; width: 10px; height: 14px; z-index: 4; }
.gutter { position: relative; flex: none; width: 14px; background: #303234; }
.vthumb { position: absolute; right: 2px; top: 23%; height: 60%; width: 4px; border-radius: 2px; background: #6e6e6e; }
.vthumb.low { top: 25%; height: 68%; background: #737b73; }
.tracks-foot { flex: none; height: 9px; background: #2d2f31; }

/* editor */
.editor { flex: 327 1 0; min-height: 0; display: flex; flex-direction: column; background: #3d3d3d; border-top: 2px solid #1c2430; }
.tabs { flex: none; align-self: center; margin: 5px 0 7px 2px; width: 256px; height: 14px; display: grid; grid-template-columns: 84px 84px 88px; background: #363636; border-radius: 3px; font-size: 8px; font-weight: 500; color: #bdbdbd; }
.tabs .active { background: #2461b4; color: #eef5ff; border-radius: 3px; }
.ebar { padding: 0 10px 2px 7px; }
.ebar .tb, .ebar .seg:not(.menuseg):not(.tools) button { width: 22px; }
.readout { width: 82px; height: 14px; background: #363636; color: #9a9a9a; display: flex; align-items: center; justify-content: flex-end; gap: 7px; padding-right: 13px; font: 9px/12px Inter, sans-serif; }
.ebody { flex: 1; min-height: 0; display: grid; grid-template-columns: 184px 26px 1fr 11px; grid-template-rows: 30px minmax(0, 1fr); }
.ehead { grid-column: 1 / 3; display: flex; align-items: center; padding: 0 8px 0 7px; background: #404040; }
.eicon { width: 18px; height: 20px; margin-right: 12px; }
.enames { flex: 1; display: flex; flex-direction: column; line-height: 10px; white-space: nowrap; padding-top: 2px; }
.enames b { font-weight: 500; font-size: 10px; color: #f2f2f2; }
.enames span { color: #a6a6a6; font-size: 8px; }
.eruler { position: relative; background: #292929; overflow: hidden; }
.enums span { position: absolute; top: 0; padding-left: 3px; font: 9px/13px Inter, sans-serif; color: #c4c4c4; }
.eticks { position: absolute; inset: 0; width: 100%; height: 100%; }
.eregion { position: absolute; right: 0; bottom: 1px; height: 14px; background: #a9f9b0; border-radius: 3px 3px 0 0; color: #2c6a3a; font: 500 8px/14px Roboto, sans-serif; display: flex; align-items: center; gap: 5px; padding-left: 3px; }
.corner { background: #30332f; }
.params { background: #4b4b4b; padding: 6px 13px 0; border-left: 1px solid #3a3a3a; }
.pset { border: 0; margin: 0 -13px; padding: 0 13px; border-bottom: 1px solid #404040; min-width: 0; font-size: 8px; }
.pset:last-child { border: 0; }
.plab { display: block; height: 13px; line-height: 13px; color: #bcbcbc; white-space: nowrap; }
.prow { display: flex; gap: 6px; height: 14px; align-items: center; }
.pset:nth-child(1) { height: 105px; }
.pset:nth-child(2) { height: 44px; padding-top: 6px; }
.pset:nth-child(3) { padding-top: 3px; }
.q { font: 500 9px/12px Inter, sans-serif; color: #eee; background: #5a5a5a; }
.params .pick { background: #5a5a5a; }
.grow { flex: 1; min-width: 0; }
.key { width: 39px; }
.mixed { font-family: Roboto, "Noto Sans CJK JP", sans-serif; }
.pval { display: flex; justify-content: space-between; height: 16px; align-items: center; color: #bcbcbc; margin-top: 3px; }
.pval output { font: 500 9px/12px Inter, sans-serif; color: #f0f0f0; }
.pset .range { height: 14px; }
.keys, .roll { width: 100%; height: 100%; display: block; }
.keys text { font: 15px Roboto, sans-serif; fill: #555; text-anchor: end; }
.hscroll { flex: none; height: 10px; background: #2c302c; display: flex; align-items: center; padding-left: 58%; }
.hthumb { width: 29%; height: 5px; border-radius: 3px; background: #656765; }
.editor .gutter { width: auto; background: #2b332b; }
```

FILE: app.js
```js
const $ = id => document.getElementById(id);
const icon = (name, cls) => `<svg class="ic ${cls || ''}"><use href="#${name}"/></svg>`;

/* library categories: name, downloadable */
const library = [['Bass', 0], ['Drum Kit', 1], ['Electronic Drum Kit', 1], ['Guitar', 1], ['Keyboards', 1], ['Mallet', 1],
  ['Orchestral', 1], ['Percussion', 1], ['Piano', 1], ['Quick Sampler', 0], ['Studio Horns', 1], ['Studio Strings', 1],
  ['Synthesizer', 1], ['Vintage B3 Organ', 0], ['Vintage Clav', 0], ['Vintage Electric Piano', 1], ['Vintage Mellotron', 0],
  ['World', 1], ['Arpeggiator', 1], ['Cinematic', 1], ['レガシー', 0]];
$('library').innerHTML = library.map(([n, d]) =>
  `<li><a href="#" class="${n === 'レガシー' ? 'jp' : ''}">${n}</a>${d ? icon('i-dl', 'w10') : ''}${icon('i-right', 'w8')}</li>`).join('');

/* tracks: number, icon, name, active, colour, regions [start bar, end bar, name, kind, loop points] */
const G = '#20d83a', D = '#28a83a', B = '#4c8ae0';
const tracks = [
  [1, 't-keys', 'Inst 1', 1, D, [[1, 32, 'Inst 1', '', [9, 17, 25]], [33, 63, 'Inst 1', '', [41, 49, 57]], [77.1, 81, 'Inst 1', 'tight'], [81, 97, 'Inst 1'], [97, 113, 'Inst 1']]],
  [2, 't-grand', 'Parallel Earth Piano', 1, D, [[9, 32, 'Parallel Earth Piano', '', [17, 25]], [33, 63, 'Parallel Earth Piano', '', [41, 49, 57]]]],
  [3, 't-box', 'Atlanta', 1, D, [[17, 32, 'Atlanta', '', [25]], [33, 63, 'Atlanta', '', [41, 49, 57]], [73.2, 76, 'Atl', 'tight'], [79.2, 81, 'A', 'tight'], [81, 113, 'Atlanta']]],
  [28, 't-box', 'Festival Drop', 0, D, [[97, 113, 'Festival Drop']]],
  [55, 't-synth', 'Subby Bass', 1, D, [[25, 32, 'Subby Ba'], [33, 63, 'Subby Bass', '', [41, 49, 57]], [75.1, 78, 'Su', 'tight'], [79.2, 97, 'Subby Bass'], [97, 113, 'Subby Bass']]],
  [56, 't-guitar', 'Crunchy Pop', 0, G, [[79.2, 97, 'Subby Bass'], [97, 113, 'Subby Bass']]],
  [57, 't-x', 'Click - Atlanta', 0, G, [[32.1, 33, '']]],
  [58, 't-box2', 'FM Piano', 1, G, [[33, 65, 'FM Piano']]],
  [59, 't-rack', 'Steinway...nd Piano 2', 0, D, [[65, 81, 'Steinway Grand Piano 2', 'pale'], [97, 113, 'Steinway Grand Piano 2']]],
  [60, 't-note', 'Inst 31', 0, G, [[80.2, 95, 'Inst 31']]],
  [61, 't-box2', 'Custom Triangle Lead3', 0, G, [[81, 97, 'Custom Triangle Lead3']]],
  [62, 't-box2', 'Custom Triangle Lead3', 0, G, [[81, 97, 'Custom Triangle Lead3']]],
  [63, 't-grand', 'Steinway...nd Piano 2', 0, B, [[109.2, 113, 'Stein', 'audio tight']]],
  [64, 't-wave', 'Noise Riser Effect 03', 0, B, [[61.7, 65, 'Noi', 'audio'], [77.7, 81, 'Noi', 'audio'], [81, 84.8, 'Lase', 'audio']]]
];
$('tracks').innerHTML = tracks.map(([num, ic, name, lit, col], i) => {
  const stack = ic === 't-box';
  return `<li class="track ${i ? '' : 'sel'} ${stack ? 'stack' : ''}"><span class="tnum">${num}</span>` +
    (stack ? `<button class="tdisc" aria-label="開く">${icon('i-right', 'w8')}</button>` : '<span class="tdisc"></span>') +
    `<span class="ticon" style="color:${col}">${icon(ic)}</span>` +
    `<button class="tpow" aria-label="オン">${icon('i-power')}</button><button class="tms">M</button><button class="tms">S</button>` +
    `<span class="tname">${name}</span><span class="tdot ${lit ? 'lit' : ''}"></span></li>`;
}).join('');

const BARS = 128.4;
const pct = bar => ((bar - 1) / BARS * 100).toFixed(3) + '%';
const span = (a, b) => ((b - a) / BARS * 100).toFixed(3) + '%';
$('lanes').innerHTML = tracks.map(t => '<div class="lane">' + t[5].map(([a, b, name, kind, loops]) =>
  `<div class="region ${kind || ''}" style="left:${pct(a)};width:calc(${span(a, b)} - 1px)">` +
  (loops || []).map(l => `<i class="notch" style="left:${((l - a) / (b - a) * 100).toFixed(2)}%"></i>`).join('') +
  `${name}</div>`).join('') + '</div>').join('');
$('ruler').innerHTML = [1, 17, 33, 49, 65, 81, 97, 113].map(n =>
  `<div class="mark-num ${n === 1 ? 'first' : ''} ${n === 81 ? 'lit' : ''}" style="left:${pct(n)}"><span>${n}</span></div>`).join('');
let lines = '';
for (let b = 2; b < BARS + 1; b++) {
  lines += `<line x1="${pct(b)}" x2="${pct(b)}" y1="0" y2="12" stroke="#5a5a5a"/><line x1="${pct(b)}" x2="${pct(b)}" y1="13" y2="100%" stroke="#fff" opacity=".07"/>`;
}
$('gridlines').innerHTML = lines;
$('playhead').style.left = pct(40.46);

/* channel faders and meters */
const dbs = [0, 3, 6, 9, 12, 15, 18, 21, 24, 30, 35, 40, 45, 50, 60];
const dby = [3, 9, 15, 21, 27, 33, 39, 45, 51, 59, 65, 72, 79, 85, 92];
document.querySelectorAll('.fader').forEach(f => {
  const { left, right, hot } = f.dataset;
  let s = '<svg viewBox="0 0 46 95">';
  dby.forEach((y, i) => {
    s += `<text x="27" y="${y + 2}">${dbs[i]}</text>`;
    s += `<path d="M2 ${y}h7M4 ${y + 3}h5" stroke="#858585" stroke-width=".7"/>`;
  });
  s += '<rect x="29" y="1" width="9" height="93" fill="#2a2e2b"/>';
  [[30, +left], [34, +right]].forEach(([x, top]) => {
    if (hot) s += `<rect x="${x}" y="${top}" width="3" height="${27 - top + 8}" fill="#d9b52c"/>`;
    const g = hot ? Math.max(top, 30) : top;
    s += `<rect x="${x}" y="${g}" width="3" height="${93 - g}" fill="#3fcf55"/>`;
  });
  f.innerHTML = s + '</svg><input type="range" value="80" aria-label="音量">';
});

/* piano roll; three drawing units per pixel, eight per semitone */
const ROW = 8, C3 = 541, TOP = 252, LEFT = -420, BAR = 112.5;
const barX = n => -418.5 + (n - 61) * BAR;
const black = [1, 3, 6, 8, 10];
const mod = n => ((n % 12) + 12) % 12;
let k = `<rect x="0" y="${TOP}" width="78" height="708" fill="#dedede"/>`;
let r = `<rect x="${LEFT}" y="${TOP}" width="2247" height="708" fill="#e6e7dd"/>`;
for (let p = -53; p < 37; p++) {
  const y = C3 - (p + 1) * ROW, m = mod(p);
  if (black.includes(m)) {
    k += `<rect x="0" y="${y}" width="38" height="8" fill="#141414"/><path d="M38 ${y + 4}h40" stroke="#8a8a8a" stroke-width="2"/>`;
    r += `<rect x="${LEFT}" y="${y}" width="2247" height="8" fill="#d9dacf"/>`;
  } else if (m === 0 || m === 5) {
    k += `<path d="M0 ${y + 8}h78" stroke="#777" stroke-width="2"/>`;
    if (m === 0 && p < 36) {
      k += `<text x="74" y="${y + 7}">C${3 + p / 12}</text>`;
      r += `<path d="M${LEFT} ${y + 8}h2247" stroke="#85867f" stroke-width="${p ? 2 : 4}"/>`;
    }
  } else r += `<path d="M${LEFT} ${y + 8}h2247" stroke="#c9cabf" stroke-width="1"/>`;
}
[505, 517].forEach(y => { k += `<rect x="38" y="${y}" width="40" height="8" fill="#9d9fa8"/>`; });
k += '<rect x="38" y="573" width="40" height="12" fill="#a4a5b4"/>';
let et = '';
for (let i = 0; i < 80; i++) {
  const x = barX(61) + i * BAR / 4, strong = i % 4 === 0;
  r += `<path d="M${x} ${TOP}v${strong ? 708 : 690}" stroke="${strong ? '#84857e' : '#bdbeb3'}" stroke-width="${strong ? 3 : 2}"/>`;
  const xp = ((x - LEFT) / 2247 * 100).toFixed(3) + '%';
  et += `<line x1="${xp}" x2="${xp}" y1="${i % 8 === 0 ? 2 : strong ? 14 : 24}" y2="29" stroke="#666"/>`;
}
r += `<rect x="${LEFT}" y="${TOP}" width="452" height="708" fill="#000" opacity=".18"/>`;
r += '<path d="M32 252v706h1793V252" fill="none" stroke="#1d6a35" stroke-width="4"/>';
const notes = `48,131,489 142,158,489 156,172,465 182,198,409 171,187,433 176,192,425 190,206,433 190,206,441 197,213,449 212,228,465
226,243,481 240,256,489 142,198,505 254,368,505 395,411,505 410,426,489 424,440,465 438,454,481 452,468,489 528,592,329 522,592,369
514,592,409 508,648,449 500,592,489 592,648,489 648,704,441 704,720,425 718,734,385 648,704,505 732,748,329 752,768,329 746,762,345
760,776,353 774,790,345 788,804,337 802,818,329 816,832,297 822,838,289 828,843,297 830,846,329 844,860,369 860,876,385 874,890,393
882,898,385 890,906,377 902,918,369 916,932,353 732,760,505 760,788,489 788,816,465 830,888,489 45,128,521 39,124,545 36,122,577
33,118,601 33,114,697 142,198,545 156,172,585 170,186,561 184,200,577 198,214,585 206,224,577 220,234,585 226,242,617 212,252,521
212,252,537 254,368,521 254,324,545 326,341,537 340,356,561 254,282,577 354,370,577 368,384,585 368,384,545 382,398,521 388,404,513
388,404,561 382,402,577 398,420,577 402,422,585 466,482,521 424,440,601 410,426,617 430,446,617 416,432,641 438,488,641 474,490,649
480,514,657 486,522,601 494,592,537 592,648,545 648,704,585 704,732,545 830,888,521 830,888,545 142,158,641 128,144,657 114,130,673
240,256,673 268,284,673 254,282,633 310,330,633 348,368,633 282,298,617 330,347,617 296,312,601 142,198,697 212,252,705 254,368,729
438,480,737 480,536,753 536,552,673 550,566,657 564,580,641 578,594,673 592,608,681 602,618,673 610,626,681 620,636,713 634,650,737
648,664,697 662,678,713 676,692,769 690,706,753 704,732,737 732,760,697 760,788,681 788,816,657 830,846,681 844,860,657 860,876,673
874,890,681 882,898,673 892,908,681 902,918,713 910,926,737 920,936,769 930,958,793 972,988,793 930,958,409 1155,1182,729
1196,1212,729 1380,1408,753 1422,1438,753 1604,1632,737 1646,1662,737`.split(/\s+/).map(n => n.split(',').map(Number));
for (let i = 0; i < 12; i++) notes.push([957 + i * 2.4, 972 + i * 2.4, 417 + i * 8]);
notes.forEach(([a, b, y]) => {
  r += `<rect x="${a + 1}" y="${y - 4}" width="${b - a - 2}" height="9" fill="#bf1f42" stroke="#4d1824" stroke-width="2"/>`;
});
$('keys').innerHTML = k;
$('roll').innerHTML = r;
$('eticks').innerHTML = et;
$('eregion').style.left = ((31 - LEFT) / 2247 * 100).toFixed(3) + '%';
$('enums').innerHTML = [61, 63, 65, 67, 69, 71, 73, 75, 77, 79].map(n =>
  `<span style="left:${((barX(n) - LEFT) / 2247 * 100).toFixed(3)}%">${n}</span>`).join('');
```
